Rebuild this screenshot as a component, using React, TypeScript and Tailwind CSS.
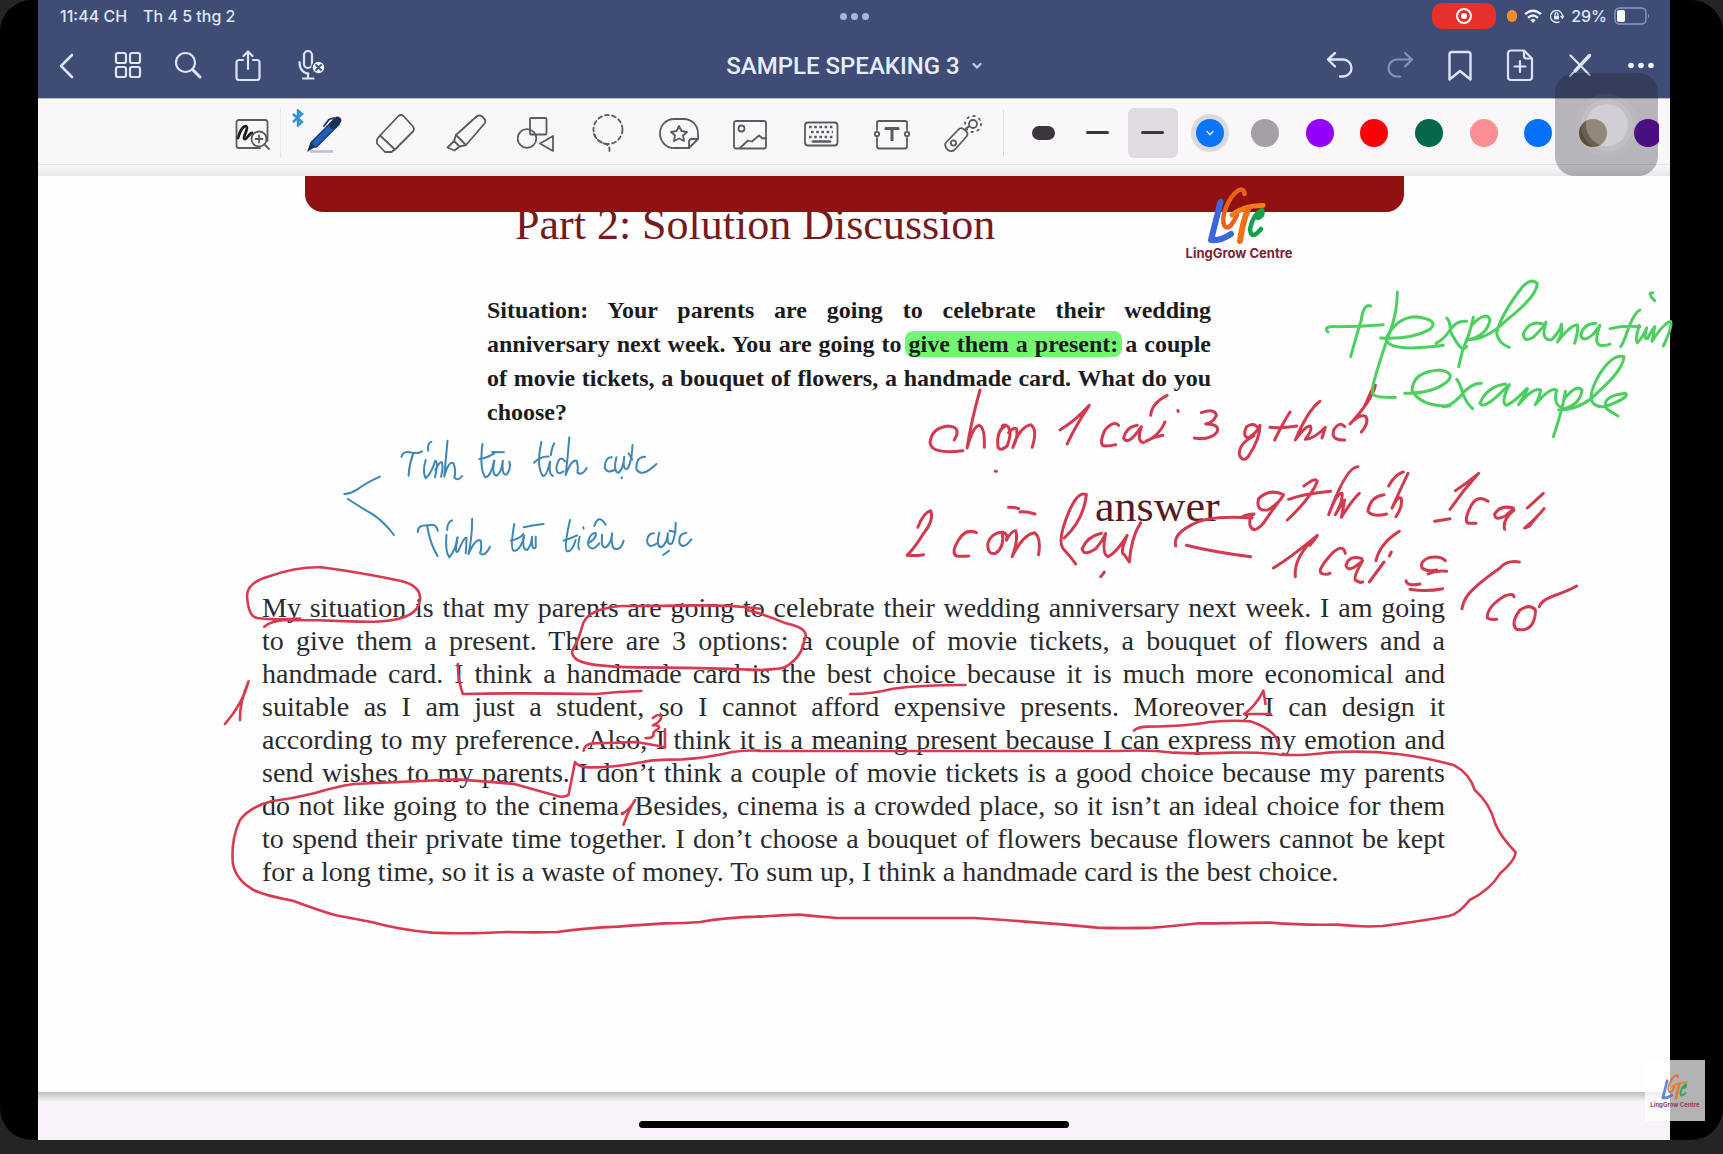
import type { ReactNode } from "react";

function Icon({ size = 40, children, className = "" }: { size?: number; children: ReactNode; className?: string }) {
  return (
    <svg
      width={size}
      height={size}
      viewBox="0 0 40 40"
      fill="none"
      stroke="currentColor"
      strokeWidth={1.8}
      strokeLinecap="round"
      strokeLinejoin="round"
      className={className}
      aria-hidden="true"
    >
      {children}
    </svg>
  );
}

/* ---------- status bar ---------- */

function StatusBar() {
  return (
    <div className="grid h-8 grid-cols-3 items-center text-base font-medium text-[#dfe6f8]">
      <div className="flex gap-4 pl-[22px]">
        <span>11:44 CH</span>
        <span>Th 4 5 thg 2</span>
      </div>
      <div className="flex justify-center gap-1">
        <span className="size-[7px] rounded-full bg-[#a9b4dd]" />
        <span className="size-[7px] rounded-full bg-[#a9b4dd]" />
        <span className="size-[7px] rounded-full bg-[#a9b4dd]" />
      </div>
      <div className="flex items-center justify-end gap-[7px] pr-5">
        <span className="mr-1 flex h-[26px] w-16 items-center justify-center rounded-[10px] bg-[#e5302c]">
          <svg width="18" height="18" viewBox="0 0 18 18" fill="none" aria-hidden="true">
            <circle cx="9" cy="9" r="7" stroke="#fff" strokeWidth="2" />
            <circle cx="9" cy="9" r="3" fill="#fff" />
          </svg>
        </span>
        <span className="h-3 w-[10px] rounded-full bg-[#f0922b]" />
        <svg width="18" height="15" viewBox="0 0 18 15" fill="none" stroke="#eef2ff" strokeWidth="2.4" aria-hidden="true">
          <path d="M1 5.2Q9 -1.8 17 5.2" />
          <path d="M4 8.8Q9 4.4 14 8.8" />
          <path d="M6.4 11.2Q9 9 11.6 11.2L9 14Z" fill="#eef2ff" stroke="none" />
        </svg>
        <svg width="15" height="15" viewBox="0 0 15 15" fill="none" stroke="#dfe6f8" strokeWidth="1.4" aria-hidden="true">
          <path d="M10.5 12.6A6 6 0 1 1 13.4 8.4" />
          <path d="M11.6 7l1.8 2 1.4-2.2" />
          <rect x="5" y="6.6" width="5" height="3.8" fill="#dfe6f8" stroke="none" />
          <path d="M6 6.6V5.4a1.5 1.5 0 0 1 3 0v1.2" />
        </svg>
        <span>29%</span>
        <svg width="36" height="18" viewBox="0 0 36 18" fill="none" aria-hidden="true">
          <rect x="1" y="1" width="31" height="16" rx="4.5" stroke="#8f9bc4" strokeWidth="1.4" />
          <rect x="3" y="3" width="8" height="12" rx="2" fill="#fff" />
          <path d="M34 6.5q2 2.5 0 5Z" fill="#8f9bc4" />
        </svg>
      </div>
    </div>
  );
}

/* ---------- navigation bar ---------- */

function NavButton({ label, children, dim = false }: { label: string; children: ReactNode; dim?: boolean }) {
  return (
    <button
      type="button"
      aria-label={label}
      className={dim ? "flex h-14 w-[60px] items-center justify-center text-[#8792bb]" : "flex h-14 w-[60px] items-center justify-center text-[#dce4fa]"}
    >
      {children}
    </button>
  );
}

function NavBar() {
  return (
    <nav className="grid h-[66px] grid-cols-[1fr_auto_1fr] items-center pt-[2px]">
      <div className="flex">
        <NavButton label="Back">
          <Icon>
            <path d="M24 9L13 20L24 31" strokeWidth={2.6} />
          </Icon>
        </NavButton>
        <NavButton label="Pages">
          <Icon>
            <g strokeWidth={2.2}>
              <rect x="8" y="7" width="10" height="10" rx="2" />
              <rect x="22" y="7" width="10" height="10" rx="2" />
              <rect x="8" y="21" width="10" height="10" rx="2" />
              <rect x="22" y="21" width="10" height="10" rx="2" />
            </g>
          </Icon>
        </NavButton>
        <NavButton label="Search">
          <Icon>
            <circle cx="17.5" cy="16.5" r="9.5" strokeWidth={2.2} />
            <path d="M24.5 23.5L32 31" strokeWidth={3} />
          </Icon>
        </NavButton>
        <NavButton label="Share">
          <Icon>
            <g strokeWidth={2.2}>
              <path d="M15 14H11a2.5 2.5 0 0 0-2.5 2.5V31.500A2.5 2.5 0 0 0 11 34H29A2.5 2.5 0 0 0 31.5 31.5V16.500A2.5 2.5 0 0 0 29 14H25" />
              <path d="M20 23V6M15.5 10L20 5.5L24.5 10" />
            </g>
          </Icon>
        </NavButton>
        <NavButton label="Record audio">
          <Icon className="ml-2">
            <rect x="12" y="5" width="8" height="17" rx="4" strokeWidth={2.2} />
            <path d="M7.500 16C7.500 24 12 27.500 16.500 27.500M16 27.500V32M11 32.500H21.500" strokeWidth={2.2} />
            <circle cx="26.500" cy="21.500" r="6.500" fill="#eef2ff" stroke="#3f4c76" strokeWidth={1.4} />
            <path d="M24 19L29 24M29 19L24 24" stroke="#3f4c76" strokeWidth={1.8} />
          </Icon>
        </NavButton>
      </div>
      <button type="button" className="flex items-center gap-3 font-[Roboto] text-2xl leading-8 font-medium text-[#e6ecfd]">
        SAMPLE SPEAKING 3
        <svg width="10" height="8" viewBox="0 0 10 8" fill="none" stroke="#c3cdee" strokeWidth="2.2" strokeLinecap="round" aria-hidden="true">
          <path d="M1.5 2L5 5.5L8.5 2" />
        </svg>
      </button>
      <div className="flex justify-end">
        <NavButton label="Undo">
          <Icon>
            <path d="M15 7L8 13.5L15 20.5M8.500 13.5H23A8.5 8.5 0 0 1 23 30.5H20" strokeWidth={2.4} />
          </Icon>
        </NavButton>
        <NavButton label="Redo" dim>
          <Icon>
            <path d="M25 7L32 13.5L25 20.5M31.500 13.5H17A8.5 8.5 0 0 0 17 30.5H20" strokeWidth={2.2} />
          </Icon>
        </NavButton>
        <NavButton label="Bookmark">
          <Icon>
            <path d="M9.500 33.500V8.500A2.5 2.5 0 0 1 12 6H28A2.5 2.5 0 0 1 30.5 8.500V33.500L20 25Z" strokeWidth={2.4} />
          </Icon>
        </NavButton>
        <NavButton label="Add page">
          <Icon>
            <g strokeWidth={2.2}>
              <path d="M24 4.500H11A3 3 0 0 0 8 7.500V31A3 3 0 0 0 11 34H29A3 3 0 0 0 32 31V12.500Z" />
              <path d="M24 5V10A2.5 2.5 0 0 0 26.5 12.500H31.500" />
              <path d="M20 15V26M14.500 20.500H25.500" />
            </g>
          </Icon>
        </NavButton>
        <NavButton label="Stop drawing">
          <Icon>
            <path d="M10.500 9.500L29.500 29" strokeWidth={2.2} />
            <path d="M29.500 9.500L15 25" strokeWidth={3.4} />
            <path d="M13 27L10 30" strokeWidth={2} />
          </Icon>
        </NavButton>
        <NavButton label="More">
          <Icon>
            <g fill="#f3f6ff" stroke="none">
              <circle cx="11" cy="19.500" r="2.800" />
              <circle cx="21" cy="19.500" r="2.800" />
              <circle cx="31" cy="19.500" r="2.800" />
            </g>
          </Icon>
        </NavButton>
      </div>
    </nav>
  );
}

/* ---------- tool bar ---------- */

function Tool({ label, children }: { label: string; children: ReactNode }) {
  return (
    <button type="button" aria-label={label} className="relative flex h-14 w-[71px] shrink-0 items-center justify-center text-[#5d5960]">
      {children}
    </button>
  );
}

const COLOURS: { name: string; dot: string }[] = [
  { name: "Grey", dot: "size-7 rounded-full bg-[#a5a0a5]" },
  { name: "Violet", dot: "size-7 rounded-full bg-[#9500f8]" },
  { name: "Red", dot: "size-7 rounded-full bg-[#fb0007]" },
  { name: "Green", dot: "size-7 rounded-full bg-[#03694a]" },
  { name: "Pink", dot: "size-7 rounded-full bg-[#fb8e93]" },
  { name: "Azure", dot: "size-7 rounded-full bg-[#0471fb]" },
  { name: "Brown", dot: "size-7 rounded-full bg-[#6b5636]" },
  { name: "Indigo", dot: "size-7 rounded-full bg-[#5c0aa8]" },
];

const KEY_ROWS = [14, 19, 24];

function ToolBar() {
  return (
    <div className="flex h-[66px] items-center border-t border-[#b9bccb] bg-[#faf7fb] pt-[2px] pl-[186px]">
      <button type="button" aria-label="Zoom window" className="flex h-14 w-14 shrink-0 items-center justify-center text-[#5d5960]">
        <Icon>
          <path d="M28 35H7A2.5 2.5 0 0 1 4.5 32.5V9.500A2.5 2.5 0 0 1 7 7H33A2.5 2.5 0 0 1 35.5 9.500V28" />
          <path d="M6 25C8 17 12 12 14.500 13.5C17 15.5 10 25 12.5 26C15 27 17 20 20 20" stroke="#1f1d20" strokeWidth={2.8} />
          <circle cx="27" cy="26" r="7.5" fill="#faf7fb" />
          <path d="M27 22.500V29.500M23.500 26H30.500M32.500 31.500L37 36" />
        </Icon>
      </button>
      <span className="mr-[7px] h-[50px] w-px shrink-0 bg-[#e9e3ea]" />
      <Tool label="Pen">
        <svg width="12" height="18" viewBox="0 0 12 18" fill="none" stroke="#2b93cf" strokeWidth="2.4" className="absolute top-1 left-1" aria-hidden="true">
          <path d="M1 5L10 13L6 16.500V1.500L10 5L1 13" />
        </svg>
        <Icon>
          <path d="M7 38.500H28" stroke="#b9bfd8" strokeWidth={2.4} />
          <path d="M3 39L7 28L13 33Z" fill="#18345f" stroke="none" />
          <path d="M11 30.500L32 9.500" stroke="#163a77" strokeWidth={8.500} />
          <path d="M11.500 30L31 10.500" stroke="#235fb9" strokeWidth={5.500} />
          <path d="M29 12L33.500 7.500" stroke="#1b3156" strokeWidth={7.500} />
          <path d="M20 13L25 6.500L30 5" stroke="#1b3156" strokeWidth={1.800} />
        </Icon>
      </Tool>
      <Tool label="Eraser">
        <Icon>
          <path d="M23.500 3Q26 1 28.500 3L38 13.500Q40 16 38 18.500L20 36.500L16.500 39H10L2 30.500V26.500L5 22.500Z" />
          <path d="M5 22.500L20 36.500" />
        </Icon>
      </Tool>
      <Tool label="Highlighter">
        <Icon>
          <path d="M10 22L30.500 3.500Q33 1.500 36 3.500L38 5.500Q40.500 8 38.500 10.500L20 32Z" />
          <path d="M10 22L8 28L13.500 33.500L20 32M8 28L1.500 34.500L8.500 37.500L13.500 33.500" />
        </Icon>
      </Tool>
      <Tool label="Shapes">
        <Icon>
          <rect x="13" y="5" width="16.500" height="16.500" rx="1" />
          <circle cx="10" cy="25.500" r="9.300" />
          <path d="M23 30.500L36 23V38Z" />
        </Icon>
      </Tool>
      <Tool label="Lasso">
        <Icon>
          <circle cx="20" cy="16.500" r="14.500" strokeDasharray="4 3.2" />
          <path d="M6 21Q8 28 18 31Q22 33 21.500 38" strokeDasharray="4 3" />
        </Icon>
      </Tool>
      <Tool label="Stickers">
        <Icon>
          <path d="M30 35H15A14 14.500 0 0 1 15 6H25A14 14.500 0 0 1 39 20.500V26Z" />
          <path d="M30 35V29A3 3 0 0 1 33 26H39" />
          <path d="M20 13L22.500 18L28 19L24 22.500L25 28L20 25.500L15 28L16 22.500L12 19L17.500 18Z" />
        </Icon>
      </Tool>
      <Tool label="Image">
        <Icon>
          <rect x="4" y="8" width="32" height="27.500" rx="2" />
          <circle cx="11.500" cy="15.500" r="3" />
          <path d="M10 35L18 27.500L22 28.500L29 22.500L32.500 25.500L36 25" />
        </Icon>
      </Tool>
      <Tool label="Keyboard">
        <Icon>
          <rect x="4" y="9.500" width="32.500" height="23" rx="3" />
          {KEY_ROWS.map((y, row) => (
            <path key={y} d={row === 1 ? `M10 ${y}H32` : `M8 ${y}H34`} strokeWidth={2.600} strokeLinecap="butt" strokeDasharray="2.6 2.6" />
          ))}
          <path d="M12 28.500H29" strokeWidth={2.600} />
        </Icon>
      </Tool>
      <Tool label="Text">
        <Icon>
          <path d="M5 17V10Q5 8 7 8H33Q35 8 35 10V17M35 25V33.500Q35 35.500 33 35.500H7Q5 35.500 5 33.500V25" />
          <circle cx="5" cy="21" r="2.200" />
          <circle cx="35" cy="21" r="2.200" />
          <path d="M14 17V15.500H26V17M20 15.500V28" strokeWidth={3} strokeLinecap="butt" />
        </Icon>
      </Tool>
      <Tool label="Laser pointer">
        <Icon>
          <path d="M15.500 16.500Q18 14 20.500 16L23.500 18.500Q25.500 21 23.500 23.500L12 36.500Q8.500 39.500 5 37Q0.500 33 3 29.500Z" />
          <circle cx="10.500" cy="30" r="2.600" />
          <path d="M22 17L25.500 13.500" />
          <circle cx="30" cy="11" r="4" />
          <circle cx="30" cy="11" r="8" strokeDasharray="1.5 4.8" strokeWidth={1.800} />
        </Icon>
      </Tool>
      <span className="mr-3 ml-[5px] h-[46px] w-px shrink-0 bg-[#e2dce3]" />
      <div className="mr-[11px] flex min-w-0 flex-1 items-center overflow-hidden">
        <div className="grid w-[164px] shrink-0 grid-cols-3 items-center justify-items-center">
          <button type="button" aria-label="Thick stroke" className="flex size-[50px] items-center justify-center">
            <span className="h-[14px] w-[23px] rounded-[7px] bg-[#3b363c]" />
          </button>
          <button type="button" aria-label="Medium stroke" className="flex size-[50px] items-center justify-center">
            <span className="h-[3px] w-[23px] rounded bg-[#3b363c]" />
          </button>
          <button type="button" aria-label="Thin stroke" aria-pressed="true" className="flex size-[50px] items-center justify-center rounded-md bg-[#dfdbe0]">
            <span className="h-[3px] w-[23px] rounded bg-[#3b363c]" />
          </button>
        </div>
        <div className="ml-[3px] grid w-[492px] shrink-0 grid-cols-9 items-center justify-items-center">
          <button type="button" aria-label="Blue" aria-pressed="true" className="flex size-[38px] items-center justify-center rounded-full bg-[#dadbe0]">
            <span className="flex size-7 items-center justify-center rounded-full bg-[#0b75f8]">
              <svg width="10" height="8" viewBox="0 0 10 8" fill="none" stroke="#cfe4ff" strokeWidth="1.6" strokeLinecap="round" aria-hidden="true">
                <path d="M2 2.500L5 5.500L8 2.500" />
              </svg>
            </span>
          </button>
          {COLOURS.map((c) => (
            <button key={c.name} type="button" aria-label={c.name} className="flex size-[38px] items-center justify-center">
              <span className={c.dot} />
            </button>
          ))}
        </div>
      </div>
    </div>
  );
}

/* ---------- logo ---------- */

function Logo({ className = "" }: { className?: string }) {
  return (
    <svg viewBox="0 0 60 60" fill="none" strokeLinecap="round" strokeLinejoin="round" className={`overflow-visible ${className}`} aria-hidden="true">
      <path d="M11.500 15L2 53Q12 54 22 47" stroke="#3a68dc" strokeWidth="6" />
      <path d="M35.500 7Q35 0 28.500 4C20 10 11 30 15.500 39Q20 45 28 28" stroke="#e8641c" strokeWidth="4.5" />
      <path d="M23 28Q36 18 54 18.500" stroke="#f47a1a" strokeWidth="5" />
      <path d="M39 22Q33 38 31 54" stroke="#f07018" strokeWidth="6" />
      <path d="M49 31Q55 29 53 23Q44 27 41 42Q42 54 52 42" stroke="#17a04a" strokeWidth="4.5" />
    </svg>
  );
}

/* ---------- handwriting ---------- */

function Strokes({ transform, color, width, paths }: { transform: string; color: string; width: number; paths: string[] }) {
  return (
    <g transform={transform} stroke={color} strokeWidth={width}>
      {paths.map((d) => (
        <path key={d} d={d} vectorEffect="non-scaling-stroke" />
      ))}
    </g>
  );
}

const BLUE_NOTES = [
  "M448 950Q410 968 385 988Q366 1001 348 1002",
  "M358 1017Q395 1043 428 1063Q462 1088 487 1125",
  "M508 890Q513 870 538 878Q555 882 566 874",
  "M541 880Q530 912 528 947",
  "M576 900Q566 935 576 955Q592 940 603 902Q612 905 602 952",
  "M583 872Q580 850 592 845",
  "M603 930Q617 900 622 908Q625 925 619 950",
  "M637 842Q632 900 628 950Q640 900 654 910Q662 935 656 952Q666 965 678 948",
  "M735 852Q726 930 743 952Q758 950 768 902",
  "M726 897Q745 895 768 880",
  "M768 902Q760 945 775 947Q788 938 792 902Q788 950 803 943Q816 925 810 905",
  "M762 876L795 877",
  "M900 846Q885 920 904 948Q915 950 924 905",
  "M879 908Q900 888 920 890",
  "M924 905Q920 945 932 947",
  "M926 886Q930 860 936 850",
  "M966 904Q950 880 942 922Q942 950 962 934",
  "M978 832Q974 890 968 945Q985 895 999 903Q1004 920 1001 938Q1014 948 1027 924",
  "M1097 892Q1079 890 1077 922Q1082 942 1104 930",
  "M1110 892Q1100 936 1116 938Q1130 925 1132 890Q1126 935 1142 925Q1154 900 1155 855",
  "M1144 880L1154 898",
  "M1190 890Q1164 890 1166 928Q1180 955 1222 912",
  "M1125 952V955",
  "M554 1116Q552 1094 585 1096Q604 1088 610 1112",
  "M580 1098Q588 1150 609 1188",
  "M634 1125Q630 1175 642 1192Q660 1170 665 1132",
  "M636 1110Q636 1086 650 1081",
  "M665 1134Q655 1190 668 1172Q684 1128 690 1134Q690 1160 688 1180",
  "M706 1076Q706 1130 696 1182Q716 1132 730 1142Q734 1165 728 1180Q742 1192 756 1160",
  "M824 1092Q812 1165 822 1172Q840 1175 852 1128",
  "M814 1142Q838 1138 850 1122",
  "M850 1130Q846 1170 860 1170Q872 1155 874 1130Q872 1175 884 1162L884 1130",
  "M850 1102Q880 1094 906 1092",
  "M980 1080Q962 1165 972 1174Q986 1176 996 1140",
  "M962 1142Q985 1134 1000 1126",
  "M1007 1130Q1000 1165 1006 1168",
  "M1017 1102L1018 1106",
  "M1030 1150Q1056 1135 1052 1118Q1034 1120 1030 1152Q1040 1180 1062 1150",
  "M1048 1098Q1060 1060 1080 1094",
  "M1070 1124Q1066 1165 1080 1162Q1096 1150 1098 1120Q1092 1175 1116 1166Q1126 1160 1130 1142",
  "M1215 1120Q1196 1120 1196 1146Q1202 1168 1224 1150",
  "M1230 1118Q1220 1160 1236 1162Q1252 1150 1254 1120Q1250 1160 1266 1150Q1276 1125 1276 1088",
  "M1258 1112L1276 1116",
  "M1306 1118Q1284 1120 1286 1148Q1296 1172 1320 1138",
  "M1241 1185Q1248 1180 1257 1172",
];

const RED_NOTES_LEFT = [
  "M488 840Q510 800 470 798Q424 804 420 848Q424 884 512 872",
  "M560 690Q534 790 524 864Q540 800 558 796Q574 802 572 862",
  "M628 800Q606 812 610 860Q616 876 636 858Q650 820 640 802Q630 790 622 798",
  "M640 818Q655 800 662 806Q668 830 652 862Q670 802 702 794Q722 808 706 862",
  "M603 934H606",
  "M784 810Q830 780 866 736Q826 800 804 852",
  "M948 796Q934 780 910 810Q890 856 910 858Q928 858 940 854",
  "M1000 796Q970 800 962 834Q974 860 1012 800Q998 846 1018 848",
  "M1078 786Q1060 830 1024 844Q1048 830 1072 826",
  "M1084 706Q1040 730 1038 766",
  "M1114 752L1115 754",
  "M1180 758Q1218 744 1222 766Q1212 788 1192 792Q1232 792 1224 816Q1204 842 1160 834",
  "M386 1102Q402 1056 422 1052Q432 1080 402 1120Q380 1160 356 1186Q380 1188 402 1184",
  "M550 1118Q520 1104 500 1140Q478 1178 494 1188Q510 1190 528 1188",
  "M622 1116Q590 1120 582 1150Q580 1186 604 1180Q630 1160 622 1116Q640 1120 634 1140",
  "M634 1140Q650 1110 660 1112Q668 1140 650 1190Q680 1124 712 1118Q732 1130 724 1184",
  "M640 1042Q656 1040 668 1046M672 1056Q690 1054 714 1062",
  "M796 1134Q850 1080 858 1004Q830 990 800 1080Q776 1150 796 1170Q814 1190 828 1212",
  "M900 1120Q860 1130 846 1166Q850 1190 884 1166Q904 1142 912 1120Q900 1180 918 1190Q940 1180 972 1126Q950 1180 964 1184L978 1206Q984 1130 1010 1088",
  "M908 1236Q904 1244 898 1250",
  "M1108 1158Q1100 1124 1150 1096Q1196 1064 1322 1074",
  "M1138 1156Q1220 1178 1318 1190",
];

const RED_NOTES_MIDDLE = [
  "M236 146Q220 124 200 140Q186 168 204 174Q230 160 240 136Q240 176 206 228Q188 250 178 224Q176 190 222 168",
  "M330 96Q308 130 284 180M270 142Q300 146 350 138",
  "M420 64Q384 90 346 180Q376 138 390 138Q400 146 376 178Q404 176 436 142L426 174",
  "M494 140Q480 122 462 148Q450 182 494 180",
  "M586 16Q576 60 510 132Q540 100 558 110Q568 128 544 156",
  "M578 24L554 78",
  "M310 344Q270 324 236 356Q226 394 262 390Q296 372 310 346Q270 400 250 430Q220 464 210 436Q206 410 222 402Q200 402 184 412",
  "M372 318Q408 290 412 304Q396 350 322 420M326 358Q370 342 452 334",
  "M534 260Q500 258 446 404Q470 340 486 340Q490 360 466 404Q486 370 494 360L484 412Q516 360 538 340",
  "M612 344Q570 350 564 394Q574 412 620 402",
  "M626 318Q646 282 670 276M684 280Q660 330 636 384Q656 344 664 356Q668 380 648 410",
  "M826 332Q860 310 896 280Q850 330 810 388",
  "M764 424L810 416",
  "M924 364Q890 340 870 384Q850 426 866 430H888",
  "M1000 384Q960 374 944 402Q944 424 976 408Q1000 386 1002 390Q966 420 974 448",
  "M1042 384Q1064 364 1090 340M1092 386Q1070 414 1034 444L1048 438L1072 408",
  "M280 564Q330 534 412 466Q340 530 346 590",
  "M410 470L390 496",
  "M496 520Q490 490 458 518Q410 570 424 580Q440 586 450 580",
  "M546 536Q506 524 498 556Q504 582 548 542Q520 590 526 600Q538 610 548 606",
  "M658 454Q600 490 588 542M612 546L568 606M634 516L628 528",
  "M796 542Q780 526 744 534Q718 546 726 564Q740 576 770 570M800 574Q770 570 744 582",
  "M678 602Q680 620 720 612M690 628Q740 636 788 626",
];

const RED_NOTES_RIGHT = [
  "M658 906Q620 900 600 924Q520 980 500 1010Q490 1024 486 1046",
  "M642 1010Q640 998 614 1008Q560 1040 562 1074Q570 1080 590 1078",
  "M706 1050Q690 1030 660 1050Q630 1090 650 1108Q690 1116 702 1080Q710 1050 704 1046M718 1040Q722 1022 760 1008Q810 990 830 978",
];

const GREEN_NOTES = [
  "M84 216Q66 198 110 200Q180 200 250 194",
  "M212 138Q190 130 184 180Q168 230 152 290",
  "M292 96Q292 160 268 220Q240 300 226 350Q216 380 218 400Q222 414 286 412",
  "M242 234Q330 240 390 208Q420 180 350 170Q290 170 258 236Q260 262 330 264Q390 262 430 256",
  "M440 174Q450 180 452 216Q470 250 480 260Q490 270 500 260",
  "M500 184Q470 180 450 210Q430 240 408 250",
  "M520 172Q510 220 488 270L476 320",
  "M514 196Q560 150 570 180Q560 230 500 240Q560 240 620 180Q710 110 712 70Q690 50 660 90Q600 170 590 220Q596 252 628 262",
  "M728 192Q690 180 670 220Q670 250 700 232Q740 190 738 186Q720 240 754 240Q784 210 784 192Q790 220 772 246Q810 196 832 194Q836 210 824 250",
  "M888 190Q850 190 842 226Q850 250 880 222L900 196Q880 250 900 256Q920 258 930 252",
  "M1020 150Q1000 160 980 220Q970 250 962 260M930 206Q970 196 1020 200",
  "M1018 196Q1004 240 1012 248Q1030 230 1040 204Q1030 240 1042 236Q1056 210 1064 200Q1060 230 1056 244Q1090 190 1112 184Q1118 200 1090 258",
  "M1058 98Q1040 98 1064 122",
  "M314 400Q400 400 440 366Q470 340 420 330Q340 334 336 390Q360 440 450 438",
  "M470 358Q480 370 490 404Q500 430 518 446M544 370Q510 370 480 410Q450 440 430 440",
  "M616 372Q560 380 540 430Q550 446 590 410L628 374Q600 430 620 436Q650 420 680 386Q690 380 656 434Q700 380 722 390Q716 420 706 434Q750 380 770 390Q760 430 780 440",
  "M796 394Q790 440 760 530M790 420Q830 370 846 390Q840 440 776 450Q840 450 890 400Q970 330 972 290Q940 280 900 340Q860 410 880 430Q900 450 940 430Q990 410 976 400Q900 410 920 446Q940 460 954 468",
];

const RED_MARKS_LEFT = [
  "M180 200Q200 182 240 180Q330 180 420 184Q500 188 540 180Q610 168 616 120Q620 76 560 62Q440 36 340 22Q270 20 190 50Q128 70 132 112Q136 170 160 174Q200 180 280 176",
  "M1568 146Q1500 136 1400 136Q1280 138 1180 138Q1080 146 1070 200Q1060 240 1046 264Q1036 280 1050 294Q1064 310 1120 316Q1170 322 1220 322Q1400 322 1568 330",
  "M722 312Q722 360 736 402Q900 398 1110 402Q1170 394 1236 393",
  "M70 492Q120 430 136 364Q110 430 112 480",
  "M1074 572Q1076 554 1100 550Q1180 548 1220 546Q1260 552 1302 562",
  "M1268 474Q1286 458 1292 470Q1290 486 1268 496Q1290 494 1284 506Q1266 516 1270 526Q1266 536 1248 534M1302 508V562",
  "M1182 762Q1204 748 1218 720Q1200 750 1186 794",
  "M1568 572Q1530 570 1490 576Q1420 594 1350 598Q1270 598 1240 606Q1150 624 1100 622Q1060 624 1050 606L1032 704Q1020 714 1000 708Q940 690 880 672Q800 664 720 658Q600 664 430 672Q380 680 320 700Q260 716 200 724Q140 740 112 780Q86 840 92 910Q100 960 150 990Q180 1006 260 1022Q330 1050 380 1066Q440 1078 480 1086Q560 1110 650 1118Q740 1122 860 1116Q940 1118 1000 1116Q1080 1104 1170 1100Q1240 1094 1300 1090Q1360 1090 1400 1086Q1470 1072 1568 1070",
];

const RED_MARKS_RIGHT = [
  "M14 150Q50 164 90 190Q140 206 126 240Q122 290 90 320Q80 330 14 330",
  "M216 402Q250 404 300 386Q360 374 442 375",
  "M772 512Q780 500 800 500Q880 498 920 486Q970 480 1000 484Q1050 510 1054 548",
  "M1040 462H988Q1010 440 1026 392L1030 432",
  "M36 573Q200 572 400 573Q600 572 740 573Q800 568 850 578Q900 582 960 578Q1020 576 1060 584Q1100 588 1150 578Q1220 570 1290 582Q1350 594 1400 616Q1430 640 1440 690Q1470 730 1480 790Q1490 830 1520 876Q1520 900 1490 940Q1470 990 1430 1020Q1410 1060 1390 1068Q1340 1082 1260 1098Q1220 1102 1170 1094Q1100 1096 1040 1088Q960 1090 900 1090Q850 1098 810 1103Q750 1106 700 1103Q600 1088 460 1074Q320 1074 190 1074Q150 1070 116 1064Q80 1066 36 1070",
];

function Ink() {
  return (
    <svg
      viewBox="38 176 1632 916"
      preserveAspectRatio="xMidYMin meet"
      fill="none"
      strokeLinecap="round"
      strokeLinejoin="round"
      className="pointer-events-none absolute inset-0 z-10 h-full w-full overflow-visible"
      role="img"
      aria-label="Handwritten notes"
    >
      <Strokes transform="translate(220 160) scale(0.35714 0.33333)" color="#3d87b7" width={2} paths={BLUE_NOTES} />
      <Strokes transform="translate(780 160) scale(0.35714 0.33333)" color="#d23a50" width={3} paths={RED_NOTES_LEFT} />
      <Strokes transform="translate(1180 380) scale(0.33333)" color="#d23a50" width={3} paths={RED_NOTES_MIDDLE} />
      <Strokes transform="translate(1300 260) scale(0.33333)" color="#d23a50" width={3} paths={RED_NOTES_RIGHT} />
      <Strokes transform="translate(1300 260) scale(0.33333)" color="#4bd05f" width={3} paths={GREEN_NOTES} />
      <Strokes transform="translate(200 560) scale(0.35714 0.33333)" color="#d93a50" width={2.6} paths={RED_MARKS_LEFT} />
      <Strokes transform="translate(740 560) scale(0.51020 0.33333)" color="#d93a50" width={2.6} paths={RED_MARKS_RIGHT} />
    </svg>
  );
}

/* ---------- document page ---------- */

const ANSWER_LINES = [
  "My situation is that my parents are going to celebrate their wedding anniversary next week. I am going",
  "to give them a present. There are 3 options: a couple of movie tickets, a bouquet of flowers and a",
  "handmade card. I think a handmade card is the best choice because it is much more economical and",
  "suitable as I am just a student, so I cannot afford expensive presents. Moreover, I can design it",
  "according to my preference. Also, I think it is a meaning present because I can express my emotion and",
  "send wishes to my parents. I don’t think a couple of movie tickets is a good choice because my parents",
  "do not like going to the cinema. Besides, cinema is a crowded place, so it isn’t an ideal choice for them",
  "to spend their private time together. I don’t choose a bouquet of flowers because flowers cannot be kept",
];

function DocumentPage() {
  return (
    <main className="relative flex-1 bg-[#fefefe] font-['Liberation_Serif',serif]">
      <div className="relative z-[1] mr-[266px] ml-[267px] h-9 rounded-b-[18px] bg-[#911113]" />
      <div className="absolute top-[11px] right-[375px] z-[2] flex w-28 flex-col items-center">
        <Logo className="size-[60px]" />
        <span className="-mt-1 font-[Inter,sans-serif] text-[13px] leading-5 font-bold whitespace-nowrap text-[#7c2433]">LingGrow Centre</span>
      </div>
      <h1 className="-mt-3 ml-[477px] text-[44px] leading-[50px] text-[#761a20]">Part 2: Solution Discussion</h1>
      <div className="mt-[43px] mr-[459px] ml-[449px] text-2xl leading-[34px] font-bold text-[#1c1c1c]">
        <p className="[text-align-last:justify]">Situation: Your parents are going to celebrate their wedding</p>
        <p className="[text-align-last:justify]">
          anniversary next week. You are going to{" "}
          <mark className="relative bg-transparent text-inherit">
            <span className="absolute -inset-x-1 top-0 bottom-0 rounded-[8px] bg-[#71f870]" />
            <span className="relative">give them a present:</span>
          </mark>{" "}
          a couple
        </p>
        <p className="[text-align-last:justify]">of movie tickets, a bouquet of flowers, a handmade card. What do you</p>
        <p>choose?</p>
      </div>
      <h2 className="mt-[53px] ml-[1057px] text-[44px] leading-[50px] text-[#5a1a20]">answer</h2>
      <div className="mt-[59px] mr-[225px] ml-[224px] text-[28px] leading-[33px] text-[#2b2b2d]">
        {ANSWER_LINES.map((line) => (
          <p key={line} className="[text-align-last:justify]">
            {line}
          </p>
        ))}
        <p>for a long time, so it is a waste of money. To sum up, I think a handmade card is the best choice.</p>
      </div>
      <Ink />
    </main>
  );
}

export default function App() {
  return (
    <div className="flex min-h-screen flex-col bg-[#242326] pb-[14px] font-[Inter,sans-serif]">
      <div className="relative flex flex-1 flex-col rounded-[32px] bg-black pr-[53px] pl-[38px]">
        <div className="relative flex flex-1 flex-col bg-[#f7f3f9]">
          <header className="bg-[#3f4c76]">
            <StatusBar />
            <NavBar />
          </header>
          <ToolBar />
          <div className="h-3 border-t border-[#eadde6] bg-linear-to-b from-[#faf7fb] to-[#e9e6ea]" />
          <DocumentPage />
          <footer className="flex h-12 items-start justify-center bg-linear-to-b from-[#bdbdbd] via-[#f7f3f9] via-20% to-[#f7f3f9] pt-[29px]">
            <span className="h-[7px] w-[430px] rounded-full bg-black" />
          </footer>
          <button
            type="button"
            aria-label="AssistiveTouch"
            className="absolute top-[73px] right-3 flex size-[103px] items-center justify-center rounded-[20px] bg-[#1d1926]/30"
          >
            <span className="flex size-[62px] items-center justify-center rounded-full bg-white/5">
              <span className="flex size-[52px] items-center justify-center rounded-full bg-white/10">
                <span className="size-[42px] rounded-full bg-white/25" />
              </span>
            </span>
          </button>
        </div>
        <div className="absolute right-[18px] bottom-[19px] flex h-[61px] w-[60px] flex-col items-center bg-white/70 pt-[14px]">
          <Logo className="size-[27px] opacity-80" />
          <span className="font-[Inter,sans-serif] text-[6px] leading-2 font-bold whitespace-nowrap text-[#96404f]">LingGrow Centre</span>
        </div>
      </div>
    </div>
  );
}
